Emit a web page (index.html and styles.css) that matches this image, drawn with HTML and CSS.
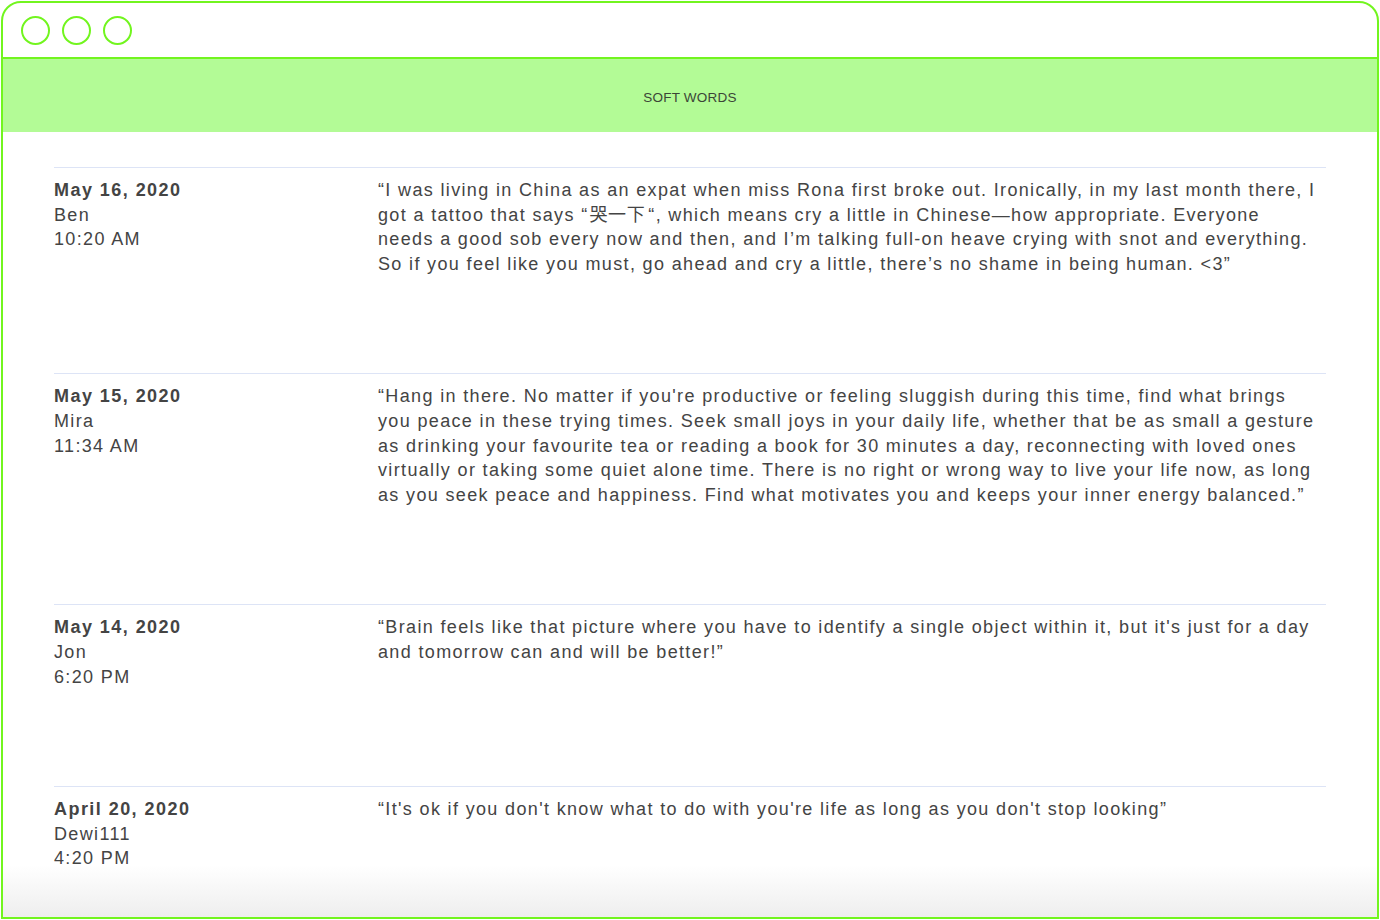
FILE: index.html
```html
<!DOCTYPE html>
<html lang="en">
<head>
<meta charset="utf-8">
<title>Soft Words</title>
<link rel="stylesheet" href="styles.css">
</head>
<body>
<div class="window">
  <div class="titlebar">
    <span class="dot"></span><span class="dot"></span><span class="dot"></span>
  </div>
  <header class="banner">SOFT WORDS</header>
  <main class="content">
    <div class="list">
      <article class="entry">
        <div class="meta">
          <div class="date">May 16, 2020</div>
          <div>Ben</div>
          <div>10:20 AM</div>
        </div>
        <p class="message">“I was living in China as an expat when miss Rona first broke out. Ironically, in my last month there, I got a tattoo that says “<span class="cjk">哭一下</span>“, which means cry a little in Chinese—how appropriate. Everyone needs a good sob every now and then, and I’m talking full-on heave crying with snot and everything. So if you feel like you must, go ahead and cry a little, there’s no shame in being human. &lt;3”</p>
      </article>
      <article class="entry">
        <div class="meta">
          <div class="date">May 15, 2020</div>
          <div>Mira</div>
          <div>11:34 AM</div>
        </div>
        <p class="message">“Hang in there. No matter if you're productive or feeling sluggish during this time, find what brings you peace in these trying times. Seek small joys in your daily life, whether that be as small a gesture as drinking your favourite tea or reading a book for 30 minutes a day, reconnecting with loved ones virtually or taking some quiet alone time. There is no right or wrong way to live your life now, as long as you seek peace and happiness. Find what motivates you and keeps your inner energy balanced.”</p>
      </article>
      <article class="entry">
        <div class="meta">
          <div class="date">May 14, 2020</div>
          <div>Jon</div>
          <div>6:20 PM</div>
        </div>
        <p class="message">“Brain feels like that picture where you have to identify a single object within it, but it's just for a day and tomorrow can and will be better!”</p>
      </article>
      <article class="entry">
        <div class="meta">
          <div class="date">April 20, 2020</div>
          <div>Dewi111</div>
          <div>4:20 PM</div>
        </div>
        <p class="message">“It's ok if you don't know what to do with you're life as long as you don't stop looking”</p>
      </article>
    </div>
    <div class="fade"></div>
  </main>
</div>
</body>
</html>
```
FILE: styles.css
```css
html, body {
  margin: 0;
  padding: 0;
  background: #ffffff;
}
body {
  padding: 1px;
  height: 920px;
  box-sizing: border-box;
  font-family: "Liberation Sans", Arial, "Noto Sans CJK SC", sans-serif;
  color: #444444;
}
.window {
  height: 918px;
  box-sizing: border-box;
  border: 2px solid #72f51f;
  border-radius: 20px 20px 0 0;
  display: flex;
  flex-direction: column;
  overflow: hidden;
}
.titlebar {
  height: 54px;
  flex: none;
  border-bottom: 2px solid #72f51f;
  display: flex;
  align-items: center;
  gap: 12px;
  padding: 0 0 0 18px;
  box-sizing: content-box;
}
.dot {
  width: 25px;
  height: 25px;
  border: 2px solid #72f51f;
  border-radius: 50%;
  box-sizing: content-box;
}
.banner {
  flex: none;
  height: 73px;
  padding-top: 3px;
  box-sizing: border-box;
  background: #b3fb96;
  display: flex;
  align-items: center;
  justify-content: center;
  font-size: 13.5px;
  color: #3b4636;
  letter-spacing: 0.2px;
}
.content {
  flex: 1;
  position: relative;
  overflow: hidden;
  padding: 35px 51px 0 51px;
}
.entry {
  display: grid;
  grid-template-columns: 324px 940px;
  border-top: 1px solid #dde4f6;
  padding: 10px 0 97px 0;
  font-size: 18px;
  line-height: 24.6px;
  letter-spacing: 1.35px;
}
.meta .date {
  font-weight: bold;
  letter-spacing: 1.45px;
}
.message {
  margin: 0;
}
.cjk {
  font-family: "Noto Sans CJK SC", sans-serif;
  line-height: 1;
  letter-spacing: 0.6px;
  padding: 0 3px 0 1px;
}
.fade {
  position: absolute;
  left: 0;
  right: 0;
  bottom: 0;
  height: 52px;
  background: linear-gradient(to bottom, rgba(255,255,255,0), #eeeeee);
  pointer-events: none;
}
```
